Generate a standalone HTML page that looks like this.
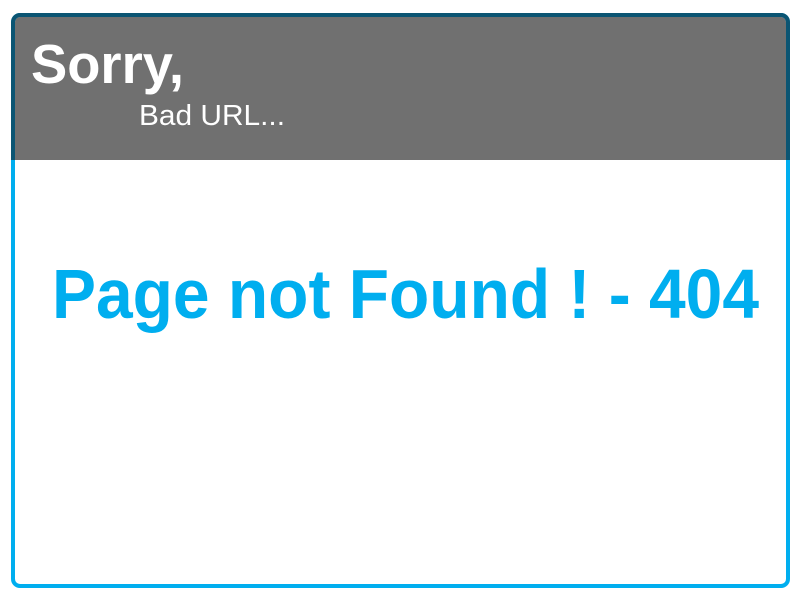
<!DOCTYPE html>
<html><head><meta charset="utf-8"><style>
html,body{margin:0;padding:0;background:#fff;width:800px;height:600px;overflow:hidden}
.box{position:absolute;left:11px;top:13px;width:771px;height:567px;border:4px solid #00aeef;border-radius:9px;overflow:hidden}
.hdr{position:absolute;left:0;top:0;right:0;height:143px;background:#707070}
svg{position:absolute;left:0;top:0}
</style></head><body>
<div class="box"><div class="hdr"></div></div>
<div style="position:absolute;left:11px;top:13px;width:779px;height:147px;border:4px solid #0b5573;border-bottom:none;border-radius:9px 9px 0 0;box-sizing:border-box"></div>
<svg width="800" height="600">
<text x="31" y="83" font-family="Liberation Sans, sans-serif" font-weight="bold" font-size="55" fill="#fff" textLength="153" lengthAdjust="spacingAndGlyphs">Sorry,</text>
<text x="139" y="125" font-family="Liberation Sans, sans-serif" font-size="29" fill="#fff" textLength="146" lengthAdjust="spacingAndGlyphs">Bad URL...</text>
<text x="52" y="318" font-family="Liberation Sans, sans-serif" font-weight="bold" font-size="70" fill="#00aeef" textLength="707" lengthAdjust="spacingAndGlyphs">Page not Found ! - 404</text>
</svg>
</body></html>
